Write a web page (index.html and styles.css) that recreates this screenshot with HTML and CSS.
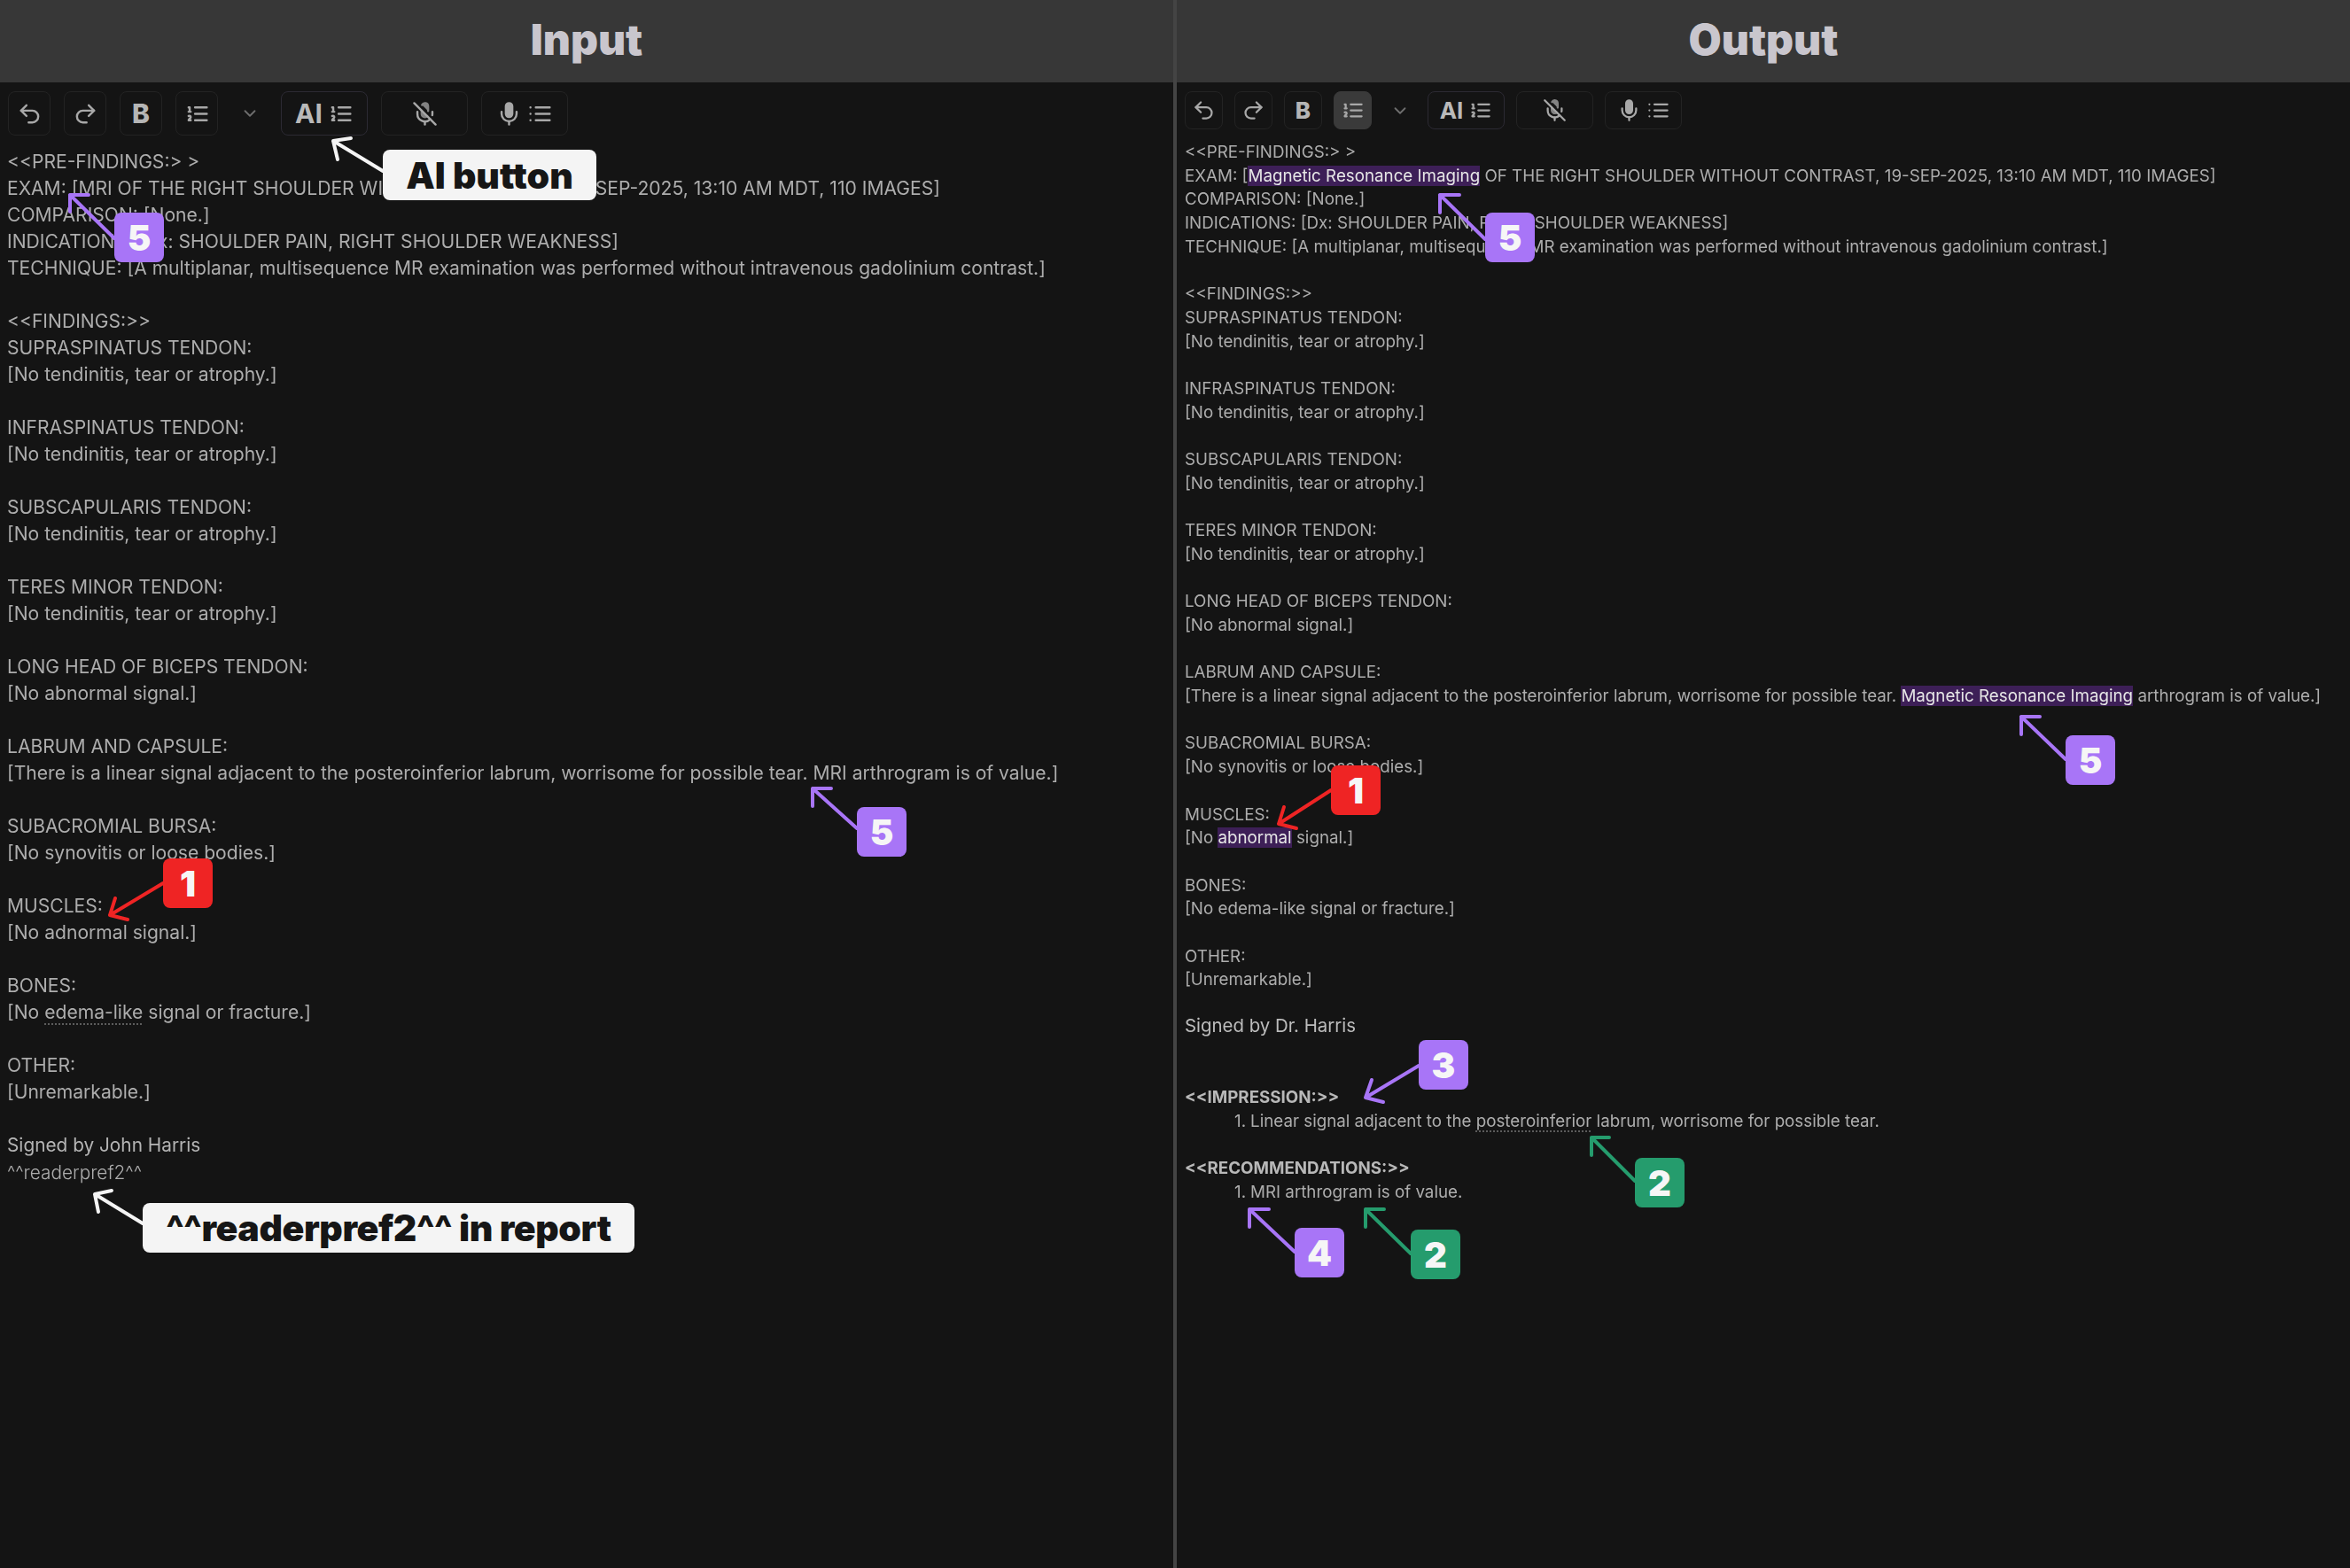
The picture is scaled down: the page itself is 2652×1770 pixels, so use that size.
FILE: index.html
```html
<!DOCTYPE html>
<html lang="en">
<head>
<meta charset="utf-8">
<title>Input / Output</title>
<link rel="stylesheet" href="styles.css">
</head>
<body>
<svg class="defs" width="0" height="0" aria-hidden="true">
  <symbol id="i-undo" viewBox="0 0 24 24"><path d="M9 14 4 9l5-5"/><path d="M4 9h10.5a5.5 5.5 0 0 1 5.5 5.5a5.5 5.5 0 0 1-5.5 5.5H11"/></symbol>
  <symbol id="i-redo" viewBox="0 0 24 24"><path d="m15 14 5-5-5-5"/><path d="M20 9H9.5A5.5 5.5 0 0 0 4 14.5A5.5 5.5 0 0 0 9.5 20H13"/></symbol>
  <symbol id="i-ol" viewBox="0 0 24 24"><path d="M10 12h11M10 18h11M10 6h11"/><path class="thin" d="M4 10h2M4 6h1v4M6 18H4c0-1 2-2 2-3s-1-1.500-2-1"/></symbol>
  <symbol id="i-ul" viewBox="0 0 24 24"><path d="M3 12h.01M3 18h.01M3 6h.01M8 12h13M8 18h13M8 6h13"/></symbol>
  <symbol id="i-chev" viewBox="0 0 24 24"><path d="m6 9 6 6 6-6"/></symbol>
  <symbol id="i-mic" viewBox="0 0 24 24"><path class="fill" d="M12 2a3 3 0 0 0-3 3v7a3 3 0 0 0 6 0V5a3 3 0 0 0-3-3Z"/><path d="M19 10v2a7 7 0 0 1-14 0v-2"/><path d="M12 19v3"/></symbol>
  <symbol id="i-micoff" viewBox="0 0 24 24"><path d="m2 2 20 20"/><path d="M18.890 13.230A7.120 7.120 0 0 0 19 12v-2"/><path d="M5 10v2a7 7 0 0 0 12 5"/><path class="fill dim" d="M15 9.340V5a3 3 0 0 0-5.680-1.330"/><path class="fill dim" d="M9 9v3a3 3 0 0 0 5.120 2.120"/><path d="M12 19v3"/></symbol>
</svg>

<main class="page">
  <section class="panel panel-in">
    <header class="head"><h1>Input</h1></header>
    <div class="tools">
      <button class="btn"><svg class="ic"><use href="#i-undo"/></svg></button>
      <button class="btn"><svg class="ic"><use href="#i-redo"/></svg></button>
      <button class="btn bold">B</button>
      <button class="btn"><svg class="ic"><use href="#i-ol"/></svg></button>
      <span class="chev"><svg class="ic-s"><use href="#i-chev"/></svg></span>
      <button class="btn wide ai"><b>AI</b><svg class="ic"><use href="#i-ol"/></svg></button>
      <button class="btn wide"><svg class="ic"><use href="#i-micoff"/></svg></button>
      <button class="btn wide"><svg class="ic"><use href="#i-mic"/></svg><svg class="ic"><use href="#i-ul"/></svg></button>
    </div>
    <article class="doc">
      <div class="sec"><p>&lt;&lt;PRE-FINDINGS:&gt; &gt;</p><p>EXAM: [MRI OF THE RIGHT SHOULDER WITHOUT CONTRAST, 19-SEP-2025, 13:10 AM MDT, 110 IMAGES]</p><p>COMPARISON: [None.]</p><p>INDICATIONS: [Dx: SHOULDER PAIN, RIGHT SHOULDER WEAKNESS]</p><p>TECHNIQUE: [A multiplanar, multisequence MR examination was performed without intravenous gadolinium contrast.]</p></div>
      <div class="sec"><p>&lt;&lt;FINDINGS:&gt;&gt;</p><p>SUPRASPINATUS TENDON:</p><p>[No tendinitis, tear or atrophy.]</p></div>
      <div class="sec"><p>INFRASPINATUS TENDON:</p><p>[No tendinitis, tear or atrophy.]</p></div>
      <div class="sec"><p>SUBSCAPULARIS TENDON:</p><p>[No tendinitis, tear or atrophy.]</p></div>
      <div class="sec"><p>TERES MINOR TENDON:</p><p>[No tendinitis, tear or atrophy.]</p></div>
      <div class="sec"><p>LONG HEAD OF BICEPS TENDON:</p><p>[No abnormal signal.]</p></div>
      <div class="sec"><p>LABRUM AND CAPSULE:</p><p>[There is a linear signal adjacent to the posteroinferior labrum, worrisome for possible tear. MRI arthrogram is of value.]</p></div>
      <div class="sec"><p>SUBACROMIAL BURSA:</p><p>[No synovitis or loose bodies.]</p></div>
      <div class="sec"><p>MUSCLES:</p><p>[No adnormal signal.]</p></div>
      <div class="sec"><p>BONES:</p><p>[No <span class="spell">edema-like</span> signal or fracture.]</p></div>
      <div class="sec"><p>OTHER:</p><p>[Unremarkable.]</p></div>
      <div class="sec"><p class="sign">Signed by John Harris</p><p class="pref">^^readerpref2^^</p></div>
    </article>
  </section>

  <section class="panel panel-out">
    <header class="head"><h1>Output</h1></header>
    <div class="tools">
      <button class="btn"><svg class="ic"><use href="#i-undo"/></svg></button>
      <button class="btn"><svg class="ic"><use href="#i-redo"/></svg></button>
      <button class="btn bold">B</button>
      <button class="btn on"><svg class="ic"><use href="#i-ol"/></svg></button>
      <span class="chev"><svg class="ic-s"><use href="#i-chev"/></svg></span>
      <button class="btn wide ai"><b>AI</b><svg class="ic"><use href="#i-ol"/></svg></button>
      <button class="btn wide"><svg class="ic"><use href="#i-micoff"/></svg></button>
      <button class="btn wide"><svg class="ic"><use href="#i-mic"/></svg><svg class="ic"><use href="#i-ul"/></svg></button>
    </div>
    <article class="doc">
      <div class="sec"><p>&lt;&lt;PRE-FINDINGS:&gt; &gt;</p><p>EXAM: [<mark>Magnetic Resonance Imaging</mark> OF THE RIGHT SHOULDER WITHOUT CONTRAST, 19-SEP-2025, 13:10 AM MDT, 110 IMAGES]</p><p>COMPARISON: [None.]</p><p>INDICATIONS: [Dx: SHOULDER PAIN, RIGHT SHOULDER WEAKNESS]</p><p>TECHNIQUE: [A multiplanar, multisequence MR examination was performed without intravenous gadolinium contrast.]</p></div>
      <div class="sec"><p>&lt;&lt;FINDINGS:&gt;&gt;</p><p>SUPRASPINATUS TENDON:</p><p>[No tendinitis, tear or atrophy.]</p></div>
      <div class="sec"><p>INFRASPINATUS TENDON:</p><p>[No tendinitis, tear or atrophy.]</p></div>
      <div class="sec"><p>SUBSCAPULARIS TENDON:</p><p>[No tendinitis, tear or atrophy.]</p></div>
      <div class="sec"><p>TERES MINOR TENDON:</p><p>[No tendinitis, tear or atrophy.]</p></div>
      <div class="sec"><p>LONG HEAD OF BICEPS TENDON:</p><p>[No abnormal signal.]</p></div>
      <div class="sec"><p>LABRUM AND CAPSULE:</p><p>[There is a linear signal adjacent to the posteroinferior labrum, worrisome for possible tear. <mark>Magnetic Resonance Imaging</mark> arthrogram is of value.]</p></div>
      <div class="sec"><p>SUBACROMIAL BURSA:</p><p>[No synovitis or loose bodies.]</p></div>
      <div class="sec"><p>MUSCLES:</p><p>[No <mark>abnormal</mark> signal.]</p></div>
      <div class="sec"><p>BONES:</p><p>[No edema-like signal or fracture.]</p></div>
      <div class="sec"><p>OTHER:</p><p>[Unremarkable.]</p></div>
      <div class="sec sec-sign"><p class="sign">Signed by Dr. Harris</p></div>
      <div class="sec sec-gap"><p class="strong">&lt;&lt;IMPRESSION:&gt;&gt;</p><ol><li>Linear signal adjacent to the <span class="spell">posteroinferior</span> labrum, worrisome for possible tear.</li></ol></div>
      <div class="sec"><p class="strong">&lt;&lt;RECOMMENDATIONS:&gt;&gt;</p><ol><li>MRI arthrogram is of value.</li></ol></div>
    </article>
  </section>

  <div class="notes">
    <svg class="arrows" width="2652" height="1770" viewBox="0 0 2652 1770">
      <g class="w"><path d="M432 193 376 159M396 156 376 159 381 180"/><path d="M161 1381 107 1348M126 1344 107 1348 111 1368"/></g>
      <g class="p"><path d="M129 269 79 220M100 220H79V239"/><path d="M967 935 917 890M938 890H917V910"/><path d="M1676 270 1625 220M1647 220H1625V240"/><path d="M2331 857 2281 809M2302 809H2281V829"/><path d="M1601 1203 1541 1239M1548 1219 1541 1239 1561 1244"/><path d="M1461 1413 1410 1365M1432 1365H1410V1385"/></g>
      <g class="r"><path d="M184 997 124 1033M130 1014 124 1033 144 1038"/><path d="M1502 892 1443 930M1449 911 1443 930 1463 935"/></g>
      <g class="g"><path d="M1845 1333 1796 1284M1816 1284H1796V1304"/><path d="M1592 1415 1541 1365M1562 1365H1541V1385"/></g>
    </svg>
    <div class="call call-ai">AI button</div>
    <div class="call call-pref">^^readerpref2^^ in report</div>
    <div class="tag purple t-5a">5</div>
    <div class="tag purple t-5b">5</div>
    <div class="tag purple t-5c">5</div>
    <div class="tag purple t-5d">5</div>
    <div class="tag red t-1a">1</div>
    <div class="tag red t-1b">1</div>
    <div class="tag purple t-3">3</div>
    <div class="tag purple t-4">4</div>
    <div class="tag green t-2a">2</div>
    <div class="tag green t-2b">2</div>
  </div>
</main>
</body>
</html>
```

FILE: styles.css
```css
* { box-sizing: border-box; }
html, body { margin: 0; padding: 0; background: #141414; }
body { font-family: Inter, "Liberation Sans", sans-serif; overflow: hidden; }
.defs { position: absolute; }

.page {
  position: relative;
  width: 2652px;
  height: 1770px;
  display: grid;
  grid-template-columns: 1324px 1324px;
  column-gap: 4px;
  background: #444444;
}
.panel { background: #141414; min-width: 0; display: flex; flex-direction: column; }

.head {
  height: 93px;
  background: #373737;
  display: flex;
  align-items: center;
  justify-content: center;
  padding-bottom: 4px;
}
.head h1 { margin: 0; font-size: 48px; line-height: 1; font-weight: 900; color: #c9c6cd; }

.tools { display: flex; align-items: stretch; margin-top: 10px; }
.btn {
  display: flex;
  align-items: center;
  justify-content: center;
  gap: 6px;
  padding: 0;
  background: transparent;
  border: 1px solid #232323;
  border-radius: 8px;
  color: #a8a8a8;
  font-family: inherit;
}
.btn.ai { border-color: #2c2a33; }
.btn.ai b { color: #b9b9b9; font-weight: 700; }
.btn.bold { color: #b5b5b5; font-weight: 800; }
.btn.on { background: #3a3a3a; border-color: #3a3a3a; }
.chev { display: flex; align-items: center; justify-content: center; color: #6e6e6e; }

.ic, .ic-s { fill: none; stroke: currentColor; stroke-width: 2; stroke-linecap: round; stroke-linejoin: round; }
.ic-s { width: 22px; height: 22px; }
.fill { fill: currentColor; }
.dim { opacity: .75; }

.doc { color: #adadad; filter: blur(0.45px); }
.doc p { margin: 0; white-space: nowrap; }
.doc .sign { color: #b4b4b4; font-weight: 400; }
.doc .strong { font-weight: 700; color: #b8b8b8; }
.doc ol { margin: 0; padding: 0; list-style: none; counter-reset: item; }
.doc li { counter-increment: item; }
.doc li::before { content: counter(item) "."; margin-right: 5px; }
mark { background: #3d1f57; color: #e6e6e6; }
.spell { text-decoration: underline dotted #5c5c5c; text-underline-offset: 5px; }

/* Input panel metrics */
.panel-in .tools { gap: 15px; padding-left: 9px; height: 50px; }
.panel-in .btn { width: 48px; }
.panel-in .btn.wide { width: 98px; }
.panel-in .btn.bold { font-size: 30px; }
.panel-in .ai b { font-size: 30px; }
.panel-in .ic { width: 29px; height: 29px; }
.panel-in .chev { width: 41px; }
.panel-in .doc { margin-top: 15px; padding-left: 8px; font-size: 21.100px; line-height: 30px; }
.panel-in .sec + .sec { margin-top: 30px; }
.panel-in .sign { font-size: 20.800px; }
.panel-in .pref { font-size: 20.800px; font-weight: 300; margin-top: 1px; }

/* Output panel metrics */
.panel-out .tools { gap: 13px; padding-left: 9px; height: 43px; }
.panel-out .btn { width: 43px; }
.panel-out .btn.wide { width: 87px; }
.panel-out .btn.bold { font-size: 26px; }
.panel-out .ai b { font-size: 26px; }
.panel-out .ic { width: 27px; height: 27px; }
.panel-out .chev { width: 37px; }
.panel-out .doc { margin-top: 13px; padding-left: 9px; font-size: 18.750px; line-height: 26.700px; }
.panel-out .sec + .sec { margin-top: 26.700px; }
.panel-out .sec + .sec-sign { margin-top: 25px; }
.panel-out .sign { font-size: 20.400px; color: #bcbcbc; }
.panel-out .sec + .sec-gap { margin-top: 54.400px; }
.panel-out .doc ol { padding-left: 56px; }

/* Annotation layer, drawn over the panels */
.notes { position: absolute; inset: 0; pointer-events: none; }
.arrows { position: absolute; left: 0; top: 0; fill: none; stroke-width: 4; stroke-linecap: round; stroke-linejoin: round; }
.arrows .w { stroke: #f4f4f4; }
.arrows .p { stroke: #a875f7; }
.arrows .r { stroke: #ef2424; }
.arrows .g { stroke: #259c6d; }

.call {
  position: absolute;
  background: #f4f4f4;
  color: #161616;
  border-radius: 8px;
  font-weight: 900;
  font-size: 41px;
  display: flex;
  align-items: center;
  justify-content: center;
  white-space: nowrap;
}
.call-ai { left: 432px; top: 169px; width: 241px; height: 57px; }
.call-pref { left: 161px; top: 1358px; width: 555px; height: 56px; letter-spacing: -0.4px; }

.tag {
  position: absolute;
  width: 56px;
  height: 56px;
  border-radius: 8px;
  color: #f6f6f6;
  font-weight: 900;
  font-size: 40px;
  display: flex;
  align-items: center;
  justify-content: center;
}
.purple { background: #a875f7; }
.red { background: #ef2424; }
.green { background: #259c6d; }
.t-5a { left: 129px; top: 240px; }
.t-5b { left: 967px; top: 911px; }
.t-5c { left: 1676px; top: 240px; }
.t-5d { left: 2331px; top: 830px; }
.t-1a { left: 184px; top: 969px; }
.t-1b { left: 1502px; top: 864px; }
.t-3 { left: 1601px; top: 1174px; }
.t-4 { left: 1461px; top: 1386px; }
.t-2a { left: 1845px; top: 1307px; }
.t-2b { left: 1592px; top: 1388px; }
```
